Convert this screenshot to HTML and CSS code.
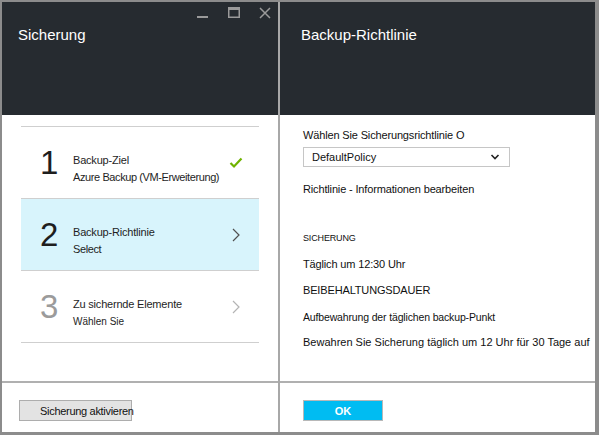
FILE: index.html
```html
<!DOCTYPE html>
<html lang="de">
<head>
<meta charset="utf-8">
<title>Sicherung</title>
<link rel="stylesheet" href="styles.css">
</head>
<body>
<div class="frame">
  <section class="panel left">
    <header class="head">
      <div class="controls">
        <svg class="ctl" width="12" height="12" viewBox="0 0 12 12"><rect x="0" y="9" width="11" height="2" fill="#9a9a9a"/></svg>
        <svg class="ctl" width="12" height="12" viewBox="0 0 12 12"><rect x="0.75" y="0.75" width="10.5" height="9.5" fill="none" stroke="#9a9a9a" stroke-width="1.5"/><rect x="0" y="0" width="12" height="3" fill="#9a9a9a"/></svg>
        <svg class="ctl" width="12" height="12" viewBox="0 0 12 12"><path d="M1 1 L11 11 M11 1 L1 11" stroke="#9a9a9a" stroke-width="1.5" fill="none"/></svg>
      </div>
      <h1 class="title">Sicherung</h1>
    </header>
    <div class="body">
      <ul class="steps">
        <li class="step">
          <span class="num">1</span>
          <div class="txt">
            <div class="t1">Backup-Ziel</div>
            <div class="t2">Azure Backup (VM-Erweiterung)</div>
          </div>
          <svg class="icon" width="14" height="12" viewBox="0 0 14 12"><path d="M1.5 6 L5 9.5 L12.5 1.5" stroke="#6fb300" stroke-width="2.2" fill="none"/></svg>
        </li>
        <li class="step active">
          <span class="num">2</span>
          <div class="txt">
            <div class="t1">Backup-Richtlinie</div>
            <div class="t2">Select</div>
          </div>
          <svg class="icon" width="14" height="14" viewBox="0 0 14 14"><path d="M4 1 L10 7 L4 13" stroke="#505050" stroke-width="1.2" fill="none"/></svg>
        </li>
        <li class="step">
          <span class="num dim">3</span>
          <div class="txt">
            <div class="t1">Zu sichernde Elemente</div>
            <div class="t2 small">Wählen Sie</div>
          </div>
          <svg class="icon" width="14" height="14" viewBox="0 0 14 14"><path d="M4 1 L10 7 L4 13" stroke="#b4b4b4" stroke-width="1.2" fill="none"/></svg>
        </li>
      </ul>
    </div>
    <footer class="foot">
      <button class="btn secondary">Sicherung aktivieren</button>
    </footer>
  </section>
  <section class="panel right">
    <header class="head">
      <div class="controls"></div>
      <h1 class="title">Backup-Richtlinie</h1>
    </header>
    <div class="body form">
      <div class="lbl">Wählen Sie Sicherungsrichtlinie O</div>
      <div class="select">
        <span>DefaultPolicy</span>
        <svg width="10" height="8" viewBox="0 0 10 8"><path d="M1.5 2 L5 5.5 L8.5 2" stroke="#222" stroke-width="1.6" fill="none"/></svg>
      </div>
      <div class="line edit">Richtlinie - Informationen bearbeiten</div>
      <div class="line cap">SICHERUNG</div>
      <div class="line gap10">Täglich um 12:30 Uhr</div>
      <div class="line gap10">BEIBEHALTUNGSDAUER</div>
      <div class="line small gap11">Aufbewahrung der täglichen backup-Punkt</div>
      <div class="line wide gap9">Bewahren Sie Sicherung täglich um 12 Uhr für 30 Tage auf</div>
    </div>
    <footer class="foot">
      <button class="btn primary">OK</button>
    </footer>
  </section>
</div>
</body>
</html>
```

FILE: styles.css
```css
* { box-sizing: border-box; }
html, body { margin: 0; padding: 0; }
body {
  font-family: "Liberation Sans", Arial, sans-serif;
  background: #ffffff;
  color: #1a1a1a;
}
.frame {
  width: 599px;
  height: 435px;
  border-style: solid;
  border-color: #8c8c8c;
  border-width: 2px 4px 3px 2px;
  display: grid;
  grid-template-columns: 276px 315px;
  column-gap: 2px;
  background: #a8a8a8;
}
.panel {
  display: flex;
  flex-direction: column;
  background: #fff;
  min-height: 0;
}
.head {
  height: 113px;
  background: #262b30;
  padding: 5px 7px 0 16px;
  flex: none;
}
.right .head { padding-left: 21px; }
.controls {
  height: 14px;
  display: flex;
  justify-content: flex-end;
  gap: 19px;
}
.ctl { display: block; }
.title {
  margin: 4px 0 0;
  font-size: 15px;
  font-weight: normal;
  line-height: 20px;
  color: #fff;
}
.body { flex: 1; }
.steps {
  list-style: none;
  margin: 11px 19px 0 19px;
  padding: 0;
  border-top: 1px solid #cfcfcf;
}
.step {
  height: 72px;
  border-bottom: 1px solid #cfcfcf;
  display: flex;
  align-items: center;
  padding: 0 16px 0 19px;
}
.step.active { background: #d8f4fc; }
.num {
  width: 33px;
  font-size: 33px;
  line-height: 34px;
  color: #1e1e1e;
  flex: none;
}
.num.dim { color: #9b9b9b; }
.txt {
  flex: 1;
  margin-top: 12px;
  font-size: 11px;
  color: #1e1e1e;
  white-space: nowrap;
  letter-spacing: -0.4px;
}
.t1 { line-height: 17px; letter-spacing: -0.2px; }
.t2 { line-height: 17px; }
.t2.small { font-size: 10px; letter-spacing: 0; }
.icon { flex: none; display: block; }
.foot {
  height: 51px;
  flex: none;
  border-top: 2px solid #b0b0b0;
  padding: 17px 0 0 17px;
}
.right .foot { padding-left: 23px; }
.btn {
  font-family: "Liberation Sans", Arial, sans-serif;
  font-size: 11px;
  height: 21px;
  margin: 0;
  display: block;
  white-space: nowrap;
}
.btn.secondary {
  width: 113px;
  background: #e3e3e3;
  border: 1px solid #adadad;
  color: #111;
  text-align: left;
  padding: 0 0 0 20px;
  overflow: visible;
  letter-spacing: -0.3px;
}
.btn.primary {
  width: 80px;
  background: #00bcf2;
  border: 1px solid #b8b8b8;
  color: #fff;
  font-weight: bold;
  font-size: 11px;
}
.form {
  padding: 12px 0 0 23px;
  font-size: 11px;
  color: #111;
}
.lbl { line-height: 16px; letter-spacing: -0.15px; }
.line { line-height: 16px; letter-spacing: -0.15px; white-space: nowrap; }
.line.wide { letter-spacing: 0; }
.select {
  margin-top: 4px;
  width: 207px;
  height: 20px;
  border: 1px solid #c6c6c6;
  display: flex;
  align-items: center;
  justify-content: space-between;
  padding: 0 9px 0 8px;
  font-size: 11px;
}
.select svg { display: block; }
.edit { margin-top: 14px; }
.cap { margin-top: 33px; font-size: 9px; }
.small { font-size: 10.5px; }
.gap10 { margin-top: 10px; }
.gap11 { margin-top: 11px; }
.gap9 { margin-top: 9px; }
```
